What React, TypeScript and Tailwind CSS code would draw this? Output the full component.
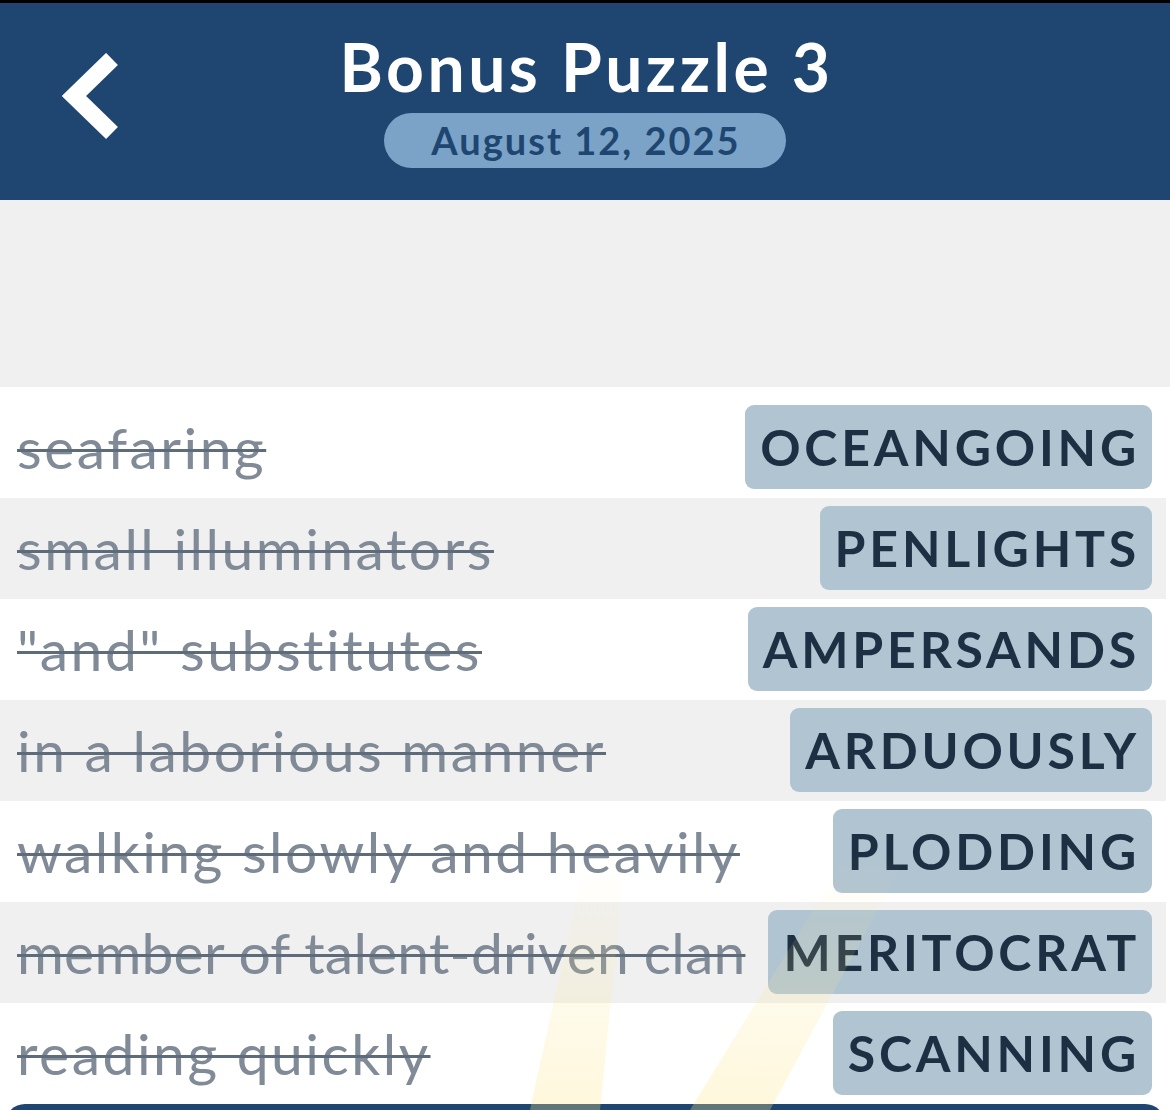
const CLUES: { clue: string; answer: string; fit?: string }[] = [
  { clue: "seafaring", answer: "OCEANGOING" },
  { clue: "small illuminators", answer: "PENLIGHTS" },
  { clue: "\"and\" substitutes", answer: "AMPERSANDS" },
  { clue: "in a laborious manner", answer: "ARDUOUSLY" },
  { clue: "walking slowly and heavily", answer: "PLODDING" },
  // la pista larga se encoge para caber junto a la respuesta
  { clue: "member of talent-driven clan", answer: "MERITOCRAT", fit: "tracking-[0.2px]" },
  { clue: "reading quickly", answer: "SCANNING" },
];

const BackChevron = () => (
  <svg width="70" height="100" viewBox="0 0 70 100" fill="none">
    <path
      d="M50 6 L12 43 L50 80"
      stroke="white"
      strokeWidth="17"
      strokeLinejoin="miter"
      strokeLinecap="butt"
    />
  </svg>
);

export default function App() {
  return (
    <div className="relative h-[1110px] w-[1170px] overflow-hidden bg-white font-['Lato','Noto_Sans',sans-serif]">
      <div className="h-[3px] bg-black" />

      {/* Cabecera */}
      <header className="relative flex h-[197px] flex-col items-center bg-[#1e4670]">
        <div className="absolute left-[62px] top-[50px]">
          <BackChevron />
        </div>
        <h1 className="mt-[24px] pl-[3px] text-[66px] font-bold leading-[80px] tracking-[3.5px] text-white">
          Bonus Puzzle 3
        </h1>
        <div className="mt-[6px] flex h-[55px] w-[402px] items-center justify-center rounded-full bg-[#7aa3c7]">
          <span className="pl-[2px] text-[38px] font-bold tracking-[2px] text-[#1e4670]">
            August 12, 2025
          </span>
        </div>
      </header>

      <div className="h-[187px] bg-[#f0f0f0]" />

      {/* Lista de pistas */}
      <div className="w-[1166px] pt-[10px]">
        {CLUES.map((item, i) => (
          <div
            key={item.answer}
            className={`flex h-[101px] items-center justify-between gap-[10px] pb-[9px] pl-[17px] pr-[14px] pt-[8px] ${
              i % 2 === 1 ? "bg-[#f0f0f0]" : "bg-white"
            }`}
          >
            <span
              className={`whitespace-nowrap text-[57px] leading-none text-[#808b97] line-through decoration-[#5d6b7b] decoration-[3px] ${
                item.fit ?? "tracking-[2.5px]"
              }`}
            >
              {item.clue}
            </span>
            <span className="flex h-[84px] shrink-0 items-center rounded-[9px] bg-[#b0c4d2] pl-[15px] pr-[12px] text-[50px] font-bold tracking-[3.8px] text-[#1c2f43]">
              {item.answer}
            </span>
          </div>
        ))}
      </div>

      <div className="mx-[5px] h-[20px] rounded-t-[22px] bg-[#1e4670]" />

      {/* Rayos de luz */}
      <svg
        className="pointer-events-none absolute left-0 top-0"
        width="1170"
        height="1110"
        viewBox="0 0 1170 1110"
      >
        <defs>
          <linearGradient id="ray" x1="0" y1="1" x2="0" y2="0">
            <stop offset="0" stopColor="#fde68a" stopOpacity="0.3" />
            <stop offset="1" stopColor="#fde68a" stopOpacity="0" />
          </linearGradient>
        </defs>
        <polygon points="530,1110 600,1110 625,860 585,860" fill="url(#ray)" />
        <polygon points="690,1110 770,1110 910,850 850,850" fill="url(#ray)" />
      </svg>
    </div>
  );
}
